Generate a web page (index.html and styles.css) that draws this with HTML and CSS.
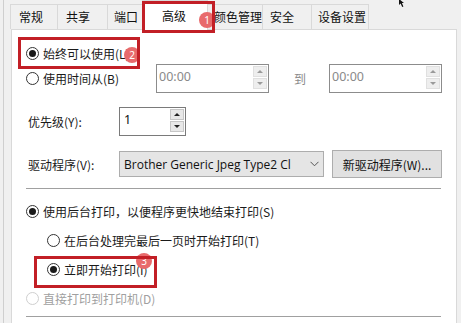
FILE: index.html
```html
<!DOCTYPE html>
<html>
<head>
<meta charset="utf-8">
<link rel="stylesheet" href="styles.css">
</head>
<body>
<div class="window">
  <div class="tabs">
    <div class="tab w1">常规</div>
    <div class="tab w2">共享</div>
    <div class="tab w3">端口</div>
    <div class="tab sel">高级</div>
    <div class="tab w5">颜色管理</div>
    <div class="tab w6">安全</div>
    <div class="tab w7">设备设置</div>
  </div>
  <div class="panel">
    <div class="row r1">
      <span class="radio on"></span><span class="lbl">始终可以使用(L)</span>
    </div>
    <div class="row r2">
      <div class="cell-time"><span class="radio"></span><span class="lbl">使用时间从(B)</span></div>
      <div class="spin time"><span class="val">00:00</span><span class="btns dis"><i class="up"></i><i class="dn"></i></span></div>
      <span class="to">到</span>
      <div class="spin time"><span class="val">00:00</span><span class="btns dis"><i class="up"></i><i class="dn"></i></span></div>
    </div>
    <div class="row r3">
      <span class="flabel">优先级(Y):</span>
      <div class="spin prio"><span class="val">1</span><span class="btns"><i class="up"></i><i class="dn"></i></span></div>
    </div>
    <div class="row r4">
      <span class="flabel">驱动程序(V):</span>
      <div class="combo"><span class="ctext">Brother Generic Jpeg Type2 Cl</span><svg class="chev" width="9" height="6" viewBox="0 0 9 6"><path d="M0.5 0.8 L4.5 4.8 L8.5 0.8" fill="none" stroke="#555" stroke-width="1"/></svg></div>
      <div class="btn">新驱动程序(W)...</div>
    </div>
    <div class="sep s1"></div>
    <div class="row r5"><span class="radio on"></span><span class="lbl">使用后台打印，以便程序更快地结束打印(S)</span></div>
    <div class="row r6 sub"><span class="radio"></span><span class="lbl">在后台处理完最后一页时开始打印(T)</span></div>
    <div class="row r7 sub"><span class="radio on"></span><span class="lbl">立即开始打印(I)</span></div>
    <div class="row r8 disabled"><span class="radio"></span><span class="lbl">直接打印到打印机(D)</span></div>
    <div class="sep s2"></div>
  </div>

  <div class="mark m1"></div>
  <div class="mark m2"></div>
  <div class="mark m3"></div>
  <div class="badge b1">1</div>
  <div class="badge b2">2</div>
  <div class="badge b3">3</div>
  <svg class="cursor" width="9" height="9" viewBox="0 0 9 9"><path d="M1 0 L1 6 L2.6 4.6 L4.2 8 L5.4 7.4 L3.9 4.1 L6 4 Z" fill="#111"/></svg>
</div>
</body>
</html>
```

FILE: styles.css
```css
* { box-sizing: border-box; }
html, body { margin: 0; padding: 0; }
body {
  width: 461px; height: 323px; overflow: hidden;
  font-family: "Noto Sans CJK SC", "Noto Sans", sans-serif;
  font-size: 12px; color: #1a1a1a;
  background: #f0f0f0;
}
.window {
  position: relative;
  width: 461px; height: 323px;
  padding-left: 10px; padding-right: 4px;
  background: #f0f0f0;
  border-left: 1px solid transparent;
}
.window::before {
  content: ""; position: absolute; left: 2px; top: 0; bottom: 0;
  width: 1px; background: #cfcfcf;
}
.tabs {
  display: flex; height: 29px; align-items: flex-end;
  position: relative; z-index: 2; margin-left: -1px;
}
.tab {
  height: 25px; line-height: 24px; padding-left: 8px;
  border: 1px solid #d9d9d9; border-bottom: none; border-right: none;
  background: #f0f0f0; color: #111; white-space: nowrap;
}
.w1 { width: 47px; }
.w2 { width: 50px; }
.w3 { width: 36px; padding-left: 6px; }
.sel { width: 66px; height: 30px; line-height: 29px; padding-left: 19px; background: #fff; margin-bottom: -1px; border-right: 1px solid #d9d9d9; margin-left: -1px; margin-right: -1px; position: relative; }
.w5 { width: 55px; padding-left: 6px; }
.w6 { width: 49px; padding-left: 7px; }
.w7 { width: 58px; padding-left: 6px; border-right: 1px solid #d9d9d9; }
.panel {
  height: 294px; background: #fff;
  border: 1px solid #d9d9d9; border-bottom: none;
  padding: 0 13px 0 14px;
  position: relative; z-index: 1;
}
.row { display: flex; align-items: center; }
.r1 { margin-top: 12px; height: 22px; }
.r2 { height: 29px; }
.r3 { margin-top: 14px; height: 29px; }
.r4 { margin-top: 14px; height: 28px; }
.r5 { margin-top: 10px; height: 24px; }
.r6, .r7, .r8 { margin-top: 5px; height: 24px; }
.sub { padding-left: 21px; }
.radio {
  width: 13px; height: 13px; border-radius: 50%;
  border: 1px solid #333; background: #fff;
  display: flex; align-items: center; justify-content: center;
  flex: none;
}
.radio.on::after { content: ""; width: 7px; height: 7px; border-radius: 50%; background: #1a1a1a; }
.lbl { margin-left: 4px; white-space: nowrap; }
.disabled .radio { border-color: #cfcfcf; }
.disabled .lbl { color: #a0a0a0; }
.cell-time { display: flex; align-items: center; width: 130px; }
.spin {
  display: flex; align-items: stretch; height: 29px;
  border: 1px solid #7a7a7a; background: #fff;
}
.time { width: 113px; border-color: #8c8c8c; }
.time .val { color: #8a8a8a; }
.val { flex: 1; padding-left: 2px; line-height: 20px; padding-top: 2px; font-family: "Noto Sans", sans-serif; font-size: 12.5px; }
.prio { width: 67px; }
.prio .val { color: #111; padding-left: 4px; }
.btns { width: 15px; display: flex; flex-direction: column; padding: 1px 1px 2px 0; }
.btns i {
  flex: 1; background: #e8e8e8; border: 1px solid #c6c6c6; margin-bottom: 1px;
  display: flex; align-items: center; justify-content: center;
}
.btns i::after { content: ""; width: 0; height: 0; border-left: 3px solid transparent; border-right: 3px solid transparent; }
.btns .up::after { border-bottom: 3px solid #222; }
.btns .dn::after { border-top: 3px solid #222; }
.btns.dis i { background: #eeeeee; border-color: #e0e0e0; }
.btns.dis .up::after { border-bottom-color: #9a9a9a; }
.btns.dis .dn::after { border-top-color: #9a9a9a; }
.to { width: 60px; text-align: center; color: #8a8a8a; padding-left: 2px; }
.flabel { width: 93px; padding-left: 2px; white-space: nowrap; }
.combo {
  width: 205px; height: 26px; background: #e5e5e5; border: 1px solid #adadad;
  display: flex; align-items: center; padding-left: 4px; padding-right: 4px;
}
.ctext { flex: 1; font-family: "Open Sans", "Noto Sans", sans-serif; font-size: 12px; white-space: nowrap; overflow: hidden; color: #111; }
.chev { flex: none; }
.btn {
  margin-left: 8px; width: 110px; height: 28px; background: #e1e1e1; border: 1px solid #adadad;
  display: flex; align-items: center; justify-content: center; white-space: nowrap; color: #111;
}
.sep { height: 1px; background: #a0a0a0; margin-right: 2px; }
.s1 { margin-top: 10px; }
.s2 { margin-top: 6px; }
.mark { position: absolute; border: 3px solid #c21f26; z-index: 5; }
.m1 { left: 141px; top: 1px; width: 73px; height: 32px; }
.m2 { left: 17px; top: 37px; width: 122px; height: 32px; }
.m3 { left: 33px; top: 256px; width: 123px; height: 32px; }
.badge {
  position: absolute; z-index: 4; width: 16px; height: 16px; border-radius: 50%;
  background: #e86a6c; color: #fff; font-family: "Noto Sans", sans-serif; font-size: 10px;
  line-height: 16px; text-align: center;
}
.b1 { left: 198px; top: 12px; }
.b2 { left: 123px; top: 47px; }
.b3 { left: 135px; top: 253px; }
.cursor { position: absolute; left: 397px; top: -1px; z-index: 6; }
```
